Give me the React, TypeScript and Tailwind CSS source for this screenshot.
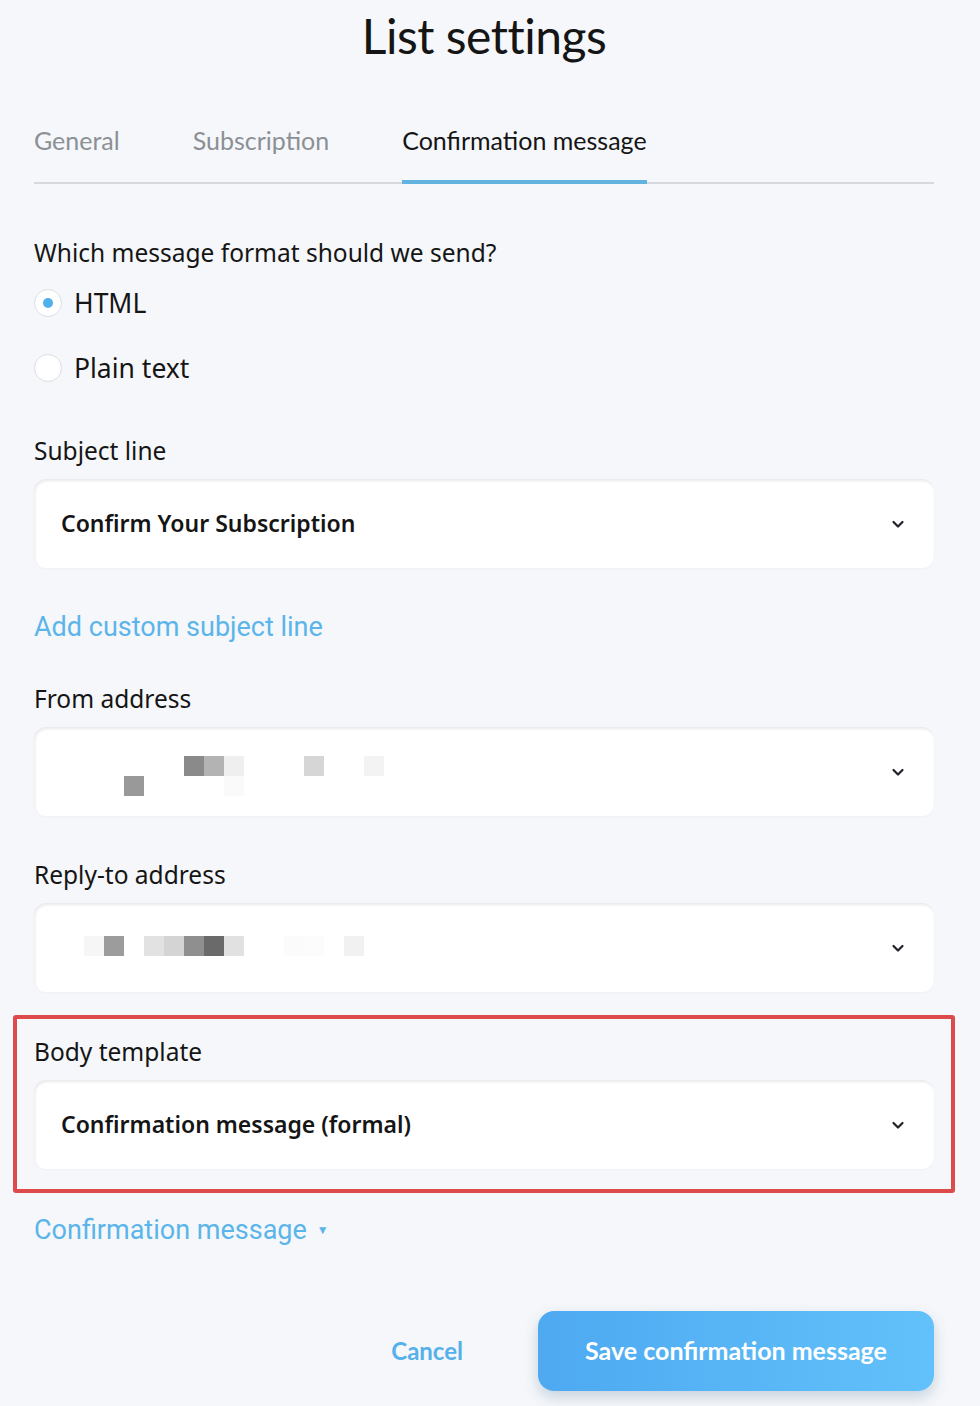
import React, { useState } from 'react';

// Redacted address: rough pixel blocks, [x, y, colour]
type Block = [number, number, string];

const fromBlocks: Block[] = [
  [60, 14, '#8a8a8a'],
  [80, 14, '#b3b3b3'],
  [100, 14, '#efefef'],
  [180, 14, '#d6d6d6'],
  [240, 14, '#f3f3f3'],
  [0, 34, '#999999'],
  [100, 34, '#fafafa'],
];

const replyBlocks: Block[] = [
  [0, 18, '#f6f6f6'],
  [20, 18, '#9c9c9c'],
  [60, 18, '#e2e2e2'],
  [80, 18, '#d4d4d4'],
  [100, 18, '#8f8f8f'],
  [120, 18, '#6a6a6a'],
  [140, 18, '#e1e1e1'],
  [200, 18, '#fbfbfb'],
  [220, 18, '#fcfcfc'],
  [260, 18, '#f1f1f1'],
];

const Redacted: React.FC<{ blocks: Block[] }> = ({ blocks }) => (
  <svg width="300" height="60" viewBox="0 0 300 60" className="block">
    {blocks.map(([x, y, c], i) => (
      <rect key={i} x={x} y={y} width="20" height="20" fill={c} />
    ))}
  </svg>
);

const Chevron = () => (
  <svg width="16" height="16" viewBox="0 0 16 16" fill="none" className="shrink-0">
    <path d="M3.5 6 L8 10.5 L12.5 6" stroke="#1f2328" strokeWidth="2.2" strokeLinecap="round" strokeLinejoin="round" />
  </svg>
);

const SelectBox: React.FC<{ children: React.ReactNode; pad?: string }> = ({ children, pad = 'pl-[27px]' }) => (
  <div
    className={`flex h-[89px] items-center justify-between rounded-[12px] bg-white pr-[28px] ${pad} shadow-[inset_1px_2px_3px_rgba(0,0,0,0.09),0_1px_2px_rgba(0,0,0,0.03)]`}
  >
    {children}
    <Chevron />
  </div>
);

const Radio: React.FC<{ label: string; checked: boolean; onClick: () => void }> = ({ label, checked, onClick }) => (
  <button type="button" onClick={onClick} className="flex items-center gap-[12px] text-left">
    <span className="flex h-[28px] w-[28px] items-center justify-center rounded-full border border-[#dcdfe3] bg-white">
      {checked && <span className="h-[10px] w-[10px] rounded-full bg-[#4fb0ee]" />}
    </span>
    <span className="text-[26.5px] leading-none text-[#151515]">{label}</span>
  </button>
);

export default function App() {
  const [format, setFormat] = useState<'html' | 'plain'>('html');
  const tabs = ['General', 'Subscription', 'Confirmation message'];

  return (
    <div className="min-h-[1406px] w-[980px] bg-[#f5f7fa] font-['Noto_Sans',sans-serif] text-[#151515]">
      <div className="pl-[34px] pr-[46px]">
        <h1 className="pt-[8px] text-center text-[48px] leading-[56px] font-normal tracking-[-0.5px] font-['Lato',sans-serif]">
          List settings
        </h1>

        {/* tabs */}
        <div className="mt-[61px] flex gap-[73px] border-b-2 border-[#d6d9dd] font-['Lato',sans-serif] text-[25px]">
          {tabs.map((t, i) => (
            <div
              key={t}
              className={`-mb-[2px] pb-[25px] leading-[30px] ${
                i === 2 ? 'border-b-4 border-[#63b3e0] text-[#151515]' : 'border-b-4 border-transparent text-[#8b9095]'
              }`}
            >
              {t}
            </div>
          ))}
        </div>

        <p className="mt-[52px] text-[24.5px] leading-[34px]">Which message format should we send?</p>

        <div className="mt-[19px] flex flex-col gap-[37px]">
          <Radio label="HTML" checked={format === 'html'} onClick={() => setFormat('html')} />
          <Radio label="Plain text" checked={format === 'plain'} onClick={() => setFormat('plain')} />
        </div>

        <p className="mt-[52px] text-[24.5px] leading-[34px]">Subject line</p>
        <div className="mt-[11px]">
          <SelectBox>
            <span className="text-[23px] font-semibold">Confirm Your Subscription</span>
          </SelectBox>
        </div>

        <a href="#" className="mt-[42px] block font-['Roboto',sans-serif] text-[27px] leading-[34px] text-[#5bb5ea]">
          Add custom subject line
        </a>

        <p className="mt-[38px] text-[24.5px] leading-[34px]">From address</p>
        <div className="mt-[11px]">
          <SelectBox pad="pl-[90px]">
            <Redacted blocks={fromBlocks} />
          </SelectBox>
        </div>

        <p className="mt-[42px] text-[24.5px] leading-[34px]">Reply-to address</p>
        <div className="mt-[11px]">
          <SelectBox pad="pl-[50px]">
            <Redacted blocks={replyBlocks} />
          </SelectBox>
        </div>
      </div>

      {/* highlighted body template */}
      <div className="mx-[13px] mt-[23px] w-[942px] rounded-[3px] border-[4px] border-[#dc4a4c] pl-[17px] pr-[17px] pt-[16px] pb-[20px]">
        <p className="text-[24.5px] leading-[34px]">Body template</p>
        <div className="mt-[11px]">
          <SelectBox>
            <span className="text-[23px] font-semibold">Confirmation message (formal)</span>
          </SelectBox>
        </div>
      </div>

      <div className="pl-[34px] pr-[46px]">
        <a href="#" className="mt-[20px] flex items-center gap-[10px] font-['Roboto',sans-serif] text-[27px] leading-[34px] text-[#5bb5ea]">
          Confirmation message
          <span className="text-[12px] leading-none">▼</span>
        </a>

        <div className="mt-[64px] flex items-center justify-end gap-[75px]">
          <button type="button" className="font-['Lato',sans-serif] text-[24px] font-bold text-[#56b0ea]">
            Cancel
          </button>
          <button
            type="button"
            className="h-[80px] w-[396px] rounded-[16px] bg-gradient-to-r from-[#4ea9f1] to-[#62c1fa] font-['Lato',sans-serif] text-[25px] font-bold text-white shadow-[0_6px_14px_rgba(60,100,140,0.25)]"
          >
            Save confirmation message
          </button>
        </div>
      </div>
    </div>
  );
}
